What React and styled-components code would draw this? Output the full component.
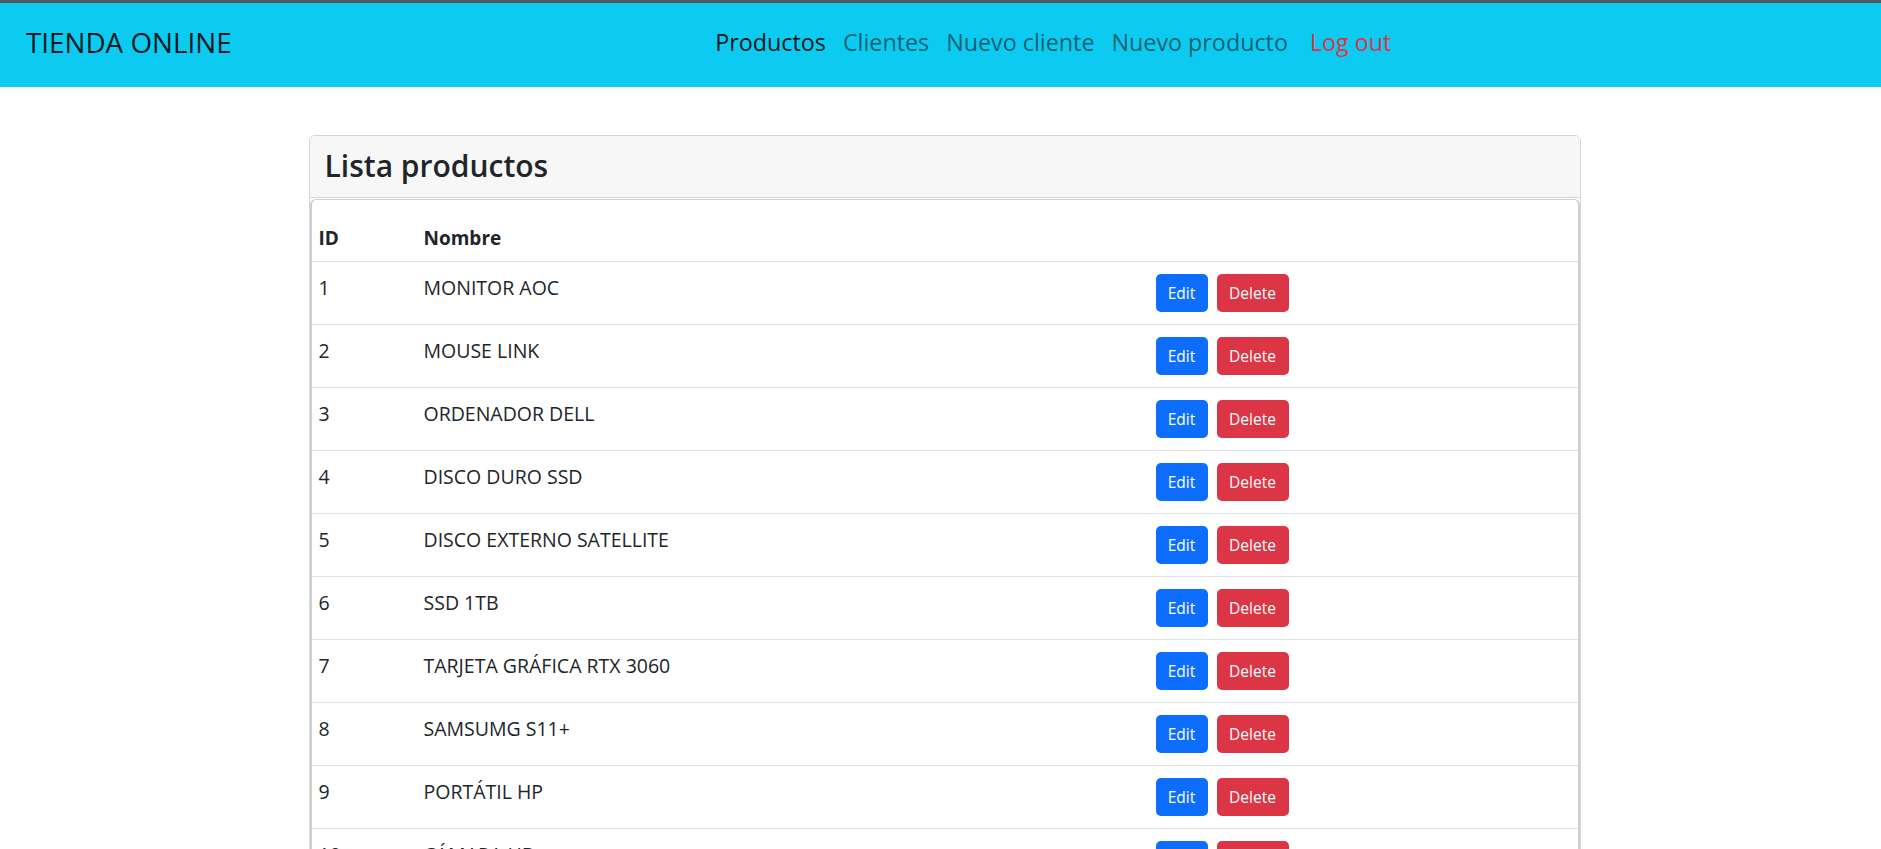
import styled, { createGlobalStyle } from "styled-components";

const GlobalStyle = createGlobalStyle`
    body {
        margin: 0;
        font-family: "Open Sans", "Noto Sans", sans-serif;
        font-size: 19px;
        color: #212529;
        background: #fff;
    }
`;

const Navbar = styled.nav`
    display: flex;
    align-items: center;
    height: 84px;
    border-top: 3px solid #4d5a63;
    background-color: #0dcaf0;
    padding: 0 26px;
`;

const Brand = styled.div`
    font-size: 27.8px;
    color: rgba(0, 0, 0, 0.9);
    flex: 0 0 auto;
    margin-top: -6px;
`;

const NavList = styled.ul`
    list-style: none;
    display: flex;
    justify-content: center;
    flex: 1;
    margin: -7px 0 0;
    padding: 0 0 0 20px;
`;

const NavLink = styled.li`
    padding: 0 8.5px;
    font-size: 23.3px;
    color: ${props => props.danger ? "#dc3545" : props.active ? "rgba(0,0,0,0.9)" : "rgba(0,0,0,0.55)"};
    margin-left: ${props => props.danger ? "5px" : "0"};
    cursor: pointer;
`;

const Container = styled.div`
    width: 1272px;
    margin: 48px auto 0;
    transform: translateX(4px);
`;

const Card = styled.div`
    border: 1px solid #d6d6d6;
    border-radius: 6px;
`;

const CardHeader = styled.div`
    background-color: #f7f7f7;
    border-bottom: 1px solid #d6d6d6;
    border-radius: 6px 6px 0 0;
    height: 62px;
    display: flex;
    align-items: center;
    padding: 0 15px 3px;
    box-sizing: border-box;
`;

const Title = styled.h3`
    margin: 0;
    font-size: 30px;
    font-weight: 600;
    color: #212529;
`;

const CardBody = styled.div`
    border: 1px solid #cfcfcf;
    border-width: 1px 2px 0 2px;
    border-radius: 6px 6px 0 0;
    margin-top: 1px;
`;

const Table = styled.table`
    width: 100%;
    border-collapse: collapse;
`;

const HeadCell = styled.th`
    text-align: left;
    font-weight: 700;
    font-size: 19px;
    padding: 24px 8px 9px 7px;
    line-height: 28px;
    width: ${props => props.width || "auto"};
    border-bottom: 1px solid #dee2e6;
`;

const Row = styled.tr`
    border-bottom: 1px solid #dee2e6;
`;

const Cell = styled.td`
    vertical-align: top;
    padding: 12px 8px 12px 7px;
    line-height: 28px;
    font-size: 19.5px;
    color: #212529;
`;

const Actions = styled.div`
    display: flex;
    gap: 9px;
`;

const Button = styled.button`
    height: 38px;
    padding: 0 12px;
    border: none;
    border-radius: 5px;
    font-family: inherit;
    font-size: 15.5px;
    color: #fff;
    background-color: ${props => props.danger ? "#dc3545" : "#0d6efd"};
    width: ${props => props.danger ? "72px" : "52px"};
    cursor: pointer;
`;

const productos = [
    { id: 1, nombre: "MONITOR AOC" },
    { id: 2, nombre: "MOUSE LINK" },
    { id: 3, nombre: "ORDENADOR DELL" },
    { id: 4, nombre: "DISCO DURO SSD" },
    { id: 5, nombre: "DISCO EXTERNO SATELLITE" },
    { id: 6, nombre: "SSD 1TB" },
    { id: 7, nombre: "TARJETA GRÁFICA RTX 3060" },
    { id: 8, nombre: "SAMSUMG S11+" },
    { id: 9, nombre: "PORTÁTIL HP" },
    { id: 10, nombre: "CÁMARA HD" },
];

const App = () => {
    return (
        <>
            <GlobalStyle />
            <Navbar>
                <Brand>TIENDA ONLINE</Brand>
                <NavList>
                    <NavLink active>Productos</NavLink>
                    <NavLink>Clientes</NavLink>
                    <NavLink>Nuevo cliente</NavLink>
                    <NavLink>Nuevo producto</NavLink>
                    <NavLink danger>Log out</NavLink>
                </NavList>
            </Navbar>
            <Container>
                <Card>
                    <CardHeader>
                        <Title>Lista productos</Title>
                    </CardHeader>
                    <CardBody>
                        <Table>
                            <thead>
                                <tr>
                                    <HeadCell width="90px">ID</HeadCell>
                                    <HeadCell width="717px">Nombre</HeadCell>
                                    <HeadCell></HeadCell>
                                </tr>
                            </thead>
                            <tbody>
                                {productos.map(p => (
                                    <Row key={p.id}>
                                        <Cell>{p.id}</Cell>
                                        <Cell>{p.nombre}</Cell>
                                        <Cell>
                                            <Actions>
                                                <Button>Edit</Button>
                                                <Button danger>Delete</Button>
                                            </Actions>
                                        </Cell>
                                    </Row>
                                ))}
                            </tbody>
                        </Table>
                    </CardBody>
                </Card>
            </Container>
        </>
    );
};

export default App;
